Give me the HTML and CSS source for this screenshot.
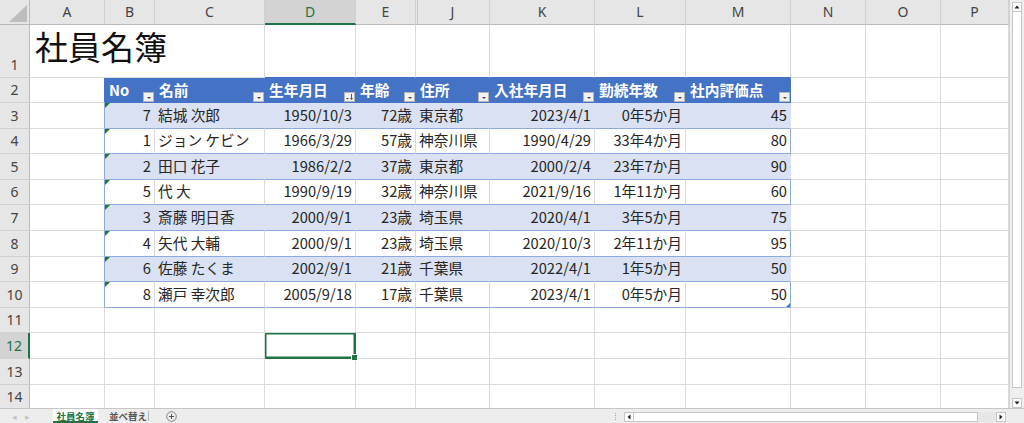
FILE: index.html
```html
<!DOCTYPE html>
<html lang="ja">
<head>
<meta charset="utf-8">
<title>社員名簿</title>
<link rel="stylesheet" href="styles.css">
</head>
<body>
<div class="app">
  <div class="main">
    <div class="sheet">
      <div class="r colh">
        <div class="c corner"><svg width="29" height="24" viewBox="0 0 29 24"><polygon points="9,22 27,22 27,5" fill="#bdbdbd"/></svg></div>
        <div class="c">A</div><div class="c">B</div><div class="c">C</div><div class="c act">D</div><div class="c">E</div><div class="c hid">J</div><div class="c">K</div><div class="c">L</div><div class="c">M</div><div class="c">N</div><div class="c">O</div><div class="c">P</div>
      </div>
      <div class="r r1">
        <div class="c h">1</div>
        <div class="c l title">社員名簿</div>
        <div class="c tb"></div><div class="c tb"></div><div class="c tb"></div><div class="c tb"></div><div class="c tb"></div><div class="c tb"></div><div class="c"></div><div class="c"></div><div class="c"></div>
      </div>
      <div class="r hd">
        <div class="c h">2</div>
        <div class="c edge"></div>
        <div class="c th"><span>No</span><span class="fb"></span></div>
        <div class="c th"><span>名前</span><span class="fb"></span></div>
        <div class="c th"><span>生年月日</span><span class="fb sort"><svg width="9" height="8" viewBox="0 0 9 8"><polygon points="1,5 4,5 2.5,6.5" fill="#444"/><path d="M6.5 1v5.5M5.3 5l1.2 1.3 1.2-1.3" stroke="#444" stroke-width="0.9" fill="none"/></svg></span></div>
        <div class="c th"><span>年齢</span><span class="fb"></span></div>
        <div class="c th"><span>住所</span><span class="fb"></span></div>
        <div class="c th"><span>入社年月日</span><span class="fb"></span></div>
        <div class="c th"><span>勤続年数</span><span class="fb"></span></div>
        <div class="c th"><span>社内評価点</span><span class="fb"></span></div>
        <div class="c"></div><div class="c"></div><div class="c"></div>
      </div>
      <div class="r bd">
        <div class="c h">3</div><div class="c edge"></div>
        <div class="c g">7</div><div class="c l">結城 次郎</div><div class="c">1950/10/3</div><div class="c">72歳</div><div class="c l">東京都</div><div class="c">2023/4/1</div><div class="c">0年5か月</div><div class="c last">45</div>
        <div class="c"></div><div class="c"></div><div class="c"></div>
      </div>
      <div class="r wh">
        <div class="c h">4</div><div class="c edge"></div>
        <div class="c g">1</div><div class="c l">ジョン ケビン</div><div class="c">1966/3/29</div><div class="c">57歳</div><div class="c l">神奈川県</div><div class="c">1990/4/29</div><div class="c">33年4か月</div><div class="c last">80</div>
        <div class="c"></div><div class="c"></div><div class="c"></div>
      </div>
      <div class="r bd">
        <div class="c h">5</div><div class="c edge"></div>
        <div class="c g">2</div><div class="c l">田口 花子</div><div class="c">1986/2/2</div><div class="c">37歳</div><div class="c l">東京都</div><div class="c">2000/2/4</div><div class="c">23年7か月</div><div class="c last">90</div>
        <div class="c"></div><div class="c"></div><div class="c"></div>
      </div>
      <div class="r wh">
        <div class="c h">6</div><div class="c edge"></div>
        <div class="c g">5</div><div class="c l">代 大</div><div class="c">1990/9/19</div><div class="c">32歳</div><div class="c l">神奈川県</div><div class="c">2021/9/16</div><div class="c">1年11か月</div><div class="c last">60</div>
        <div class="c"></div><div class="c"></div><div class="c"></div>
      </div>
      <div class="r bd">
        <div class="c h">7</div><div class="c edge"></div>
        <div class="c g">3</div><div class="c l">斎藤 明日香</div><div class="c">2000/9/1</div><div class="c">23歳</div><div class="c l">埼玉県</div><div class="c">2020/4/1</div><div class="c">3年5か月</div><div class="c last">75</div>
        <div class="c"></div><div class="c"></div><div class="c"></div>
      </div>
      <div class="r wh">
        <div class="c h">8</div><div class="c edge"></div>
        <div class="c g">4</div><div class="c l">矢代 大輔</div><div class="c">2000/9/1</div><div class="c">23歳</div><div class="c l">埼玉県</div><div class="c">2020/10/3</div><div class="c">2年11か月</div><div class="c last">95</div>
        <div class="c"></div><div class="c"></div><div class="c"></div>
      </div>
      <div class="r bd">
        <div class="c h">9</div><div class="c edge"></div>
        <div class="c g">6</div><div class="c l">佐藤 たくま</div><div class="c">2002/9/1</div><div class="c">21歳</div><div class="c l">千葉県</div><div class="c">2022/4/1</div><div class="c">1年5か月</div><div class="c last">50</div>
        <div class="c"></div><div class="c"></div><div class="c"></div>
      </div>
      <div class="r wh">
        <div class="c h">10</div><div class="c edge"></div>
        <div class="c g">8</div><div class="c l">瀬戸 幸次郎</div><div class="c">2005/9/18</div><div class="c">17歳</div><div class="c l">千葉県</div><div class="c">2023/4/1</div><div class="c">0年5か月</div><div class="c last corner-mark">50</div>
        <div class="c"></div><div class="c"></div><div class="c"></div>
      </div>
      <div class="r">
        <div class="c h">11</div><div class="c"></div><div class="c"></div><div class="c"></div><div class="c"></div><div class="c"></div><div class="c"></div><div class="c"></div><div class="c"></div><div class="c"></div><div class="c"></div><div class="c"></div><div class="c"></div>
      </div>
      <div class="r">
        <div class="c h act">12</div><div class="c"></div><div class="c"></div><div class="c"></div><div class="c sel"></div><div class="c"></div><div class="c"></div><div class="c"></div><div class="c"></div><div class="c"></div><div class="c"></div><div class="c"></div><div class="c"></div>
      </div>
      <div class="r">
        <div class="c h">13</div><div class="c"></div><div class="c"></div><div class="c"></div><div class="c"></div><div class="c"></div><div class="c"></div><div class="c"></div><div class="c"></div><div class="c"></div><div class="c"></div><div class="c"></div><div class="c"></div>
      </div>
      <div class="r">
        <div class="c h">14</div><div class="c"></div><div class="c"></div><div class="c"></div><div class="c"></div><div class="c"></div><div class="c"></div><div class="c"></div><div class="c"></div><div class="c"></div><div class="c"></div><div class="c"></div><div class="c"></div>
      </div>
    </div>
    <div class="vs">
      <div class="sbtn"><svg width="8" height="8" viewBox="0 0 8 8"><polygon points="1.5,5.5 6.5,5.5 4,2.5" fill="#222"/></svg></div>
      <div class="vthumb"></div>
      <div class="sbtn"><svg width="8" height="8" viewBox="0 0 8 8"><polygon points="1.5,2.5 6.5,2.5 4,5.5" fill="#222"/></svg></div>
    </div>
  </div>
  <div class="tabbar">
    <div class="nav"><span>◂</span><span>▸</span></div>
    <div class="tab on">社員名簿</div>
    <div class="tab off">並べ替え</div>
    <div class="sep"></div>
    <div class="add"><svg width="11" height="11" viewBox="0 0 11 11"><circle cx="5.5" cy="5.5" r="4.8" fill="none" stroke="#777" stroke-width="0.9"/><path d="M5.5 3v5M3 5.5h5" stroke="#555" stroke-width="1"/></svg></div>
    <div class="spacer"></div>
    <div class="grip"><i></i><i></i><i></i><i></i></div>
    <div class="hs">
      <div class="sbtn"><svg width="8" height="8" viewBox="0 0 8 8"><polygon points="5.5,1.5 5.5,6.5 2.5,4" fill="#222"/></svg></div>
      <div class="hthumb"></div>
      <div class="htrack"></div>
      <div class="sbtn"><svg width="8" height="8" viewBox="0 0 8 8"><polygon points="2.5,1.5 2.5,6.5 5.5,4" fill="#222"/></svg></div>
    </div>
    <div class="cornerbox"></div>
  </div>
</div>
</body>
</html>
```

FILE: styles.css
```css
* { box-sizing: border-box; margin: 0; padding: 0; }
html, body { width: 1024px; height: 423px; overflow: hidden; background: #fff; }
body { font-family: "Noto Sans CJK JP", "Noto Sans", sans-serif; color: #262626; }

.app { display: flex; flex-direction: column; height: 423px; }
.main { display: flex; height: 408px; }
.sheet { width: 1009px; height: 408px; overflow: hidden; }

.r {
  display: grid;
  grid-template-columns: 30px 75px 50px 110px 91px 60px 74px 105px 91px 105px 75px 75px 68px;
  height: 25.6px;
}
.c {
  position: relative;
  display: flex;
  align-items: flex-end;
  justify-content: flex-end;
  padding: 0 3px 4px 3px;
  border-right: 1px solid #dadada;
  border-bottom: 1px solid #dadada;
  font-size: 14.7px;
  line-height: 18px;
  white-space: nowrap;
}
.c.l { justify-content: flex-start; }

/* column header row */
.colh { height: 25px; }
.colh .c {
  background: #e6e6e6;
  border-right-color: #d0d0d0;
  border-bottom-color: #b9b9b9;
  justify-content: center;
  align-items: center;
  padding: 0;
  font-family: "Noto Sans", "Liberation Sans", sans-serif;
  font-size: 14px;
  color: #444;
}
.colh .corner { border-right-color: #bcbcbc; align-items: flex-start; justify-content: flex-start; }
.colh .act { background: #d3d3d3; color: #217346; border-bottom: 2px solid #217346; }
.colh .hid { background: linear-gradient(to right, #e6e6e6 0 1px, #c8c8c8 1px 2px, #e6e6e6 2px); }

/* row headers */
.c.h {
  background: #e6e6e6;
  border-right-color: #bcbcbc;
  border-bottom-color: #d2d2d2;
  justify-content: center;
  padding: 0 0 3px;
  font-family: "Noto Sans", "Liberation Sans", sans-serif;
  font-size: 14px;
  color: #444;
}
.c.h.act { background: #d3d3d3; color: #217346; border-right: 2px solid #217346; }

/* title row */
.r1 { height: 53px; }
.title {
  grid-column: span 3;
  font-size: 33px;
  line-height: 40px;
  padding: 0 0 11px 5px;
  color: #111;
}
.r1 .tb { border-bottom-color: #4472c4; }

/* table header */
.hd { height: 25px; }
.hd .edge { border-right-color: #4472c4; }
.c.th {
  background: #4472c4;
  border-right-color: #4472c4;
  border-bottom-color: #4472c4;
  color: #fff;
  font-weight: bold;
  justify-content: space-between;
  padding: 0 0 0 4px;
}
.c.th > span:first-child { padding-bottom: 3px; }
.fb {
  width: 11px;
  height: 10px;
  background: #f2f2f2;
  border: 1px solid #b5b5b5;
  display: flex;
  align-items: center;
  justify-content: center;
}
.fb::after {
  content: "";
  margin-top: 2px;
  border-left: 2px solid transparent;
  border-right: 2px solid transparent;
  border-top: 2px solid #444;
}
.fb.sort::after { display: none; }

/* table body */
.bd .edge, .wh .edge { border-right-color: #8ea9db; }
.bd > .c:nth-child(n+3):nth-child(-n+10) {
  background: #d9e1f2;
  border-right-color: #d9e1f2;
  border-bottom-color: #8ea9db;
}
.wh > .c:nth-child(n+3):nth-child(-n+10) { border-bottom-color: #8ea9db; }
.bd > .c.last, .wh > .c.last { border-right-color: #8ea9db; }

.c.g::before {
  content: "";
  position: absolute;
  left: 0;
  top: 0;
  border-top: 5px solid #1d7a35;
  border-right: 5px solid transparent;
}
.corner-mark::after {
  content: "";
  position: absolute;
  right: 0;
  bottom: 0;
  border-bottom: 4px solid #4472c4;
  border-left: 4px solid transparent;
}

/* active cell */
.c.sel { box-shadow: inset 0 0 0 1.5px #217346; border-right-color: #217346; border-bottom-color: #217346; }
.c.sel::after {
  content: "";
  position: absolute;
  right: -3px;
  bottom: -3px;
  width: 5px;
  height: 5px;
  background: #217346;
  border: 1px solid #fff;
  z-index: 2;
}

/* vertical scrollbar */
.vs {
  width: 15px;
  height: 408px;
  background: #efefef;
  border-left: 1px solid #d4d4d4;
  display: flex;
  flex-direction: column;
  padding: 2px 2px 0 2px;
}
.sbtn {
  width: 10px;
  height: 10px;
  flex: none;
  background: #fff;
  border: 1px solid #c6c6c6;
  display: flex;
  align-items: center;
  justify-content: center;
}
.vthumb {
  height: 376px;
  background: #fff;
  border: 1px solid #c6c6c6;
  border-top: none;
  margin-bottom: 10px;
}

/* tab bar */
.tabbar {
  height: 15px;
  display: flex;
  align-items: stretch;
  background: #ededed;
  border-top: 1px solid #c6c6c6;
  font-size: 9.5px;
  font-weight: bold;
  color: #555;
}
.nav {
  width: 53px;
  display: flex;
  align-items: center;
  gap: 8px;
  padding-left: 12px;
  color: #c2c2c2;
  font-size: 9px;
  font-weight: normal;
}
.tab {
  display: flex;
  align-items: center;
  line-height: 12px;
}
.tab.on { background: #fff; color: #217346; border-bottom: 2px solid #217346; width: 45px; justify-content: center; padding-top: 2px; }
.tab.off { width: 50px; padding-left: 11px; }
.sep { width: 1px; margin: 2px 0 2px 0; background: #b5b5b5; }
.add { display: flex; align-items: center; margin-left: 17px; }
.spacer { flex: 1; }
.grip { width: 10px; display: flex; flex-direction: column; justify-content: center; gap: 1px; padding-left: 2px; }
.grip i { display: block; width: 1px; height: 1px; background: #aaa; }
.hs {
  width: 387px;
  display: flex;
  align-items: center;
  padding: 1px 4px 0 1px;
}
.hs .sbtn { height: 10px; }
.hthumb { width: 344px; height: 10px; background: #fff; border: 1px solid #c6c6c6; border-left: none; }
.htrack { flex: 1; height: 10px; background: #e6e6e6; }
.cornerbox { width: 14px; }
```
